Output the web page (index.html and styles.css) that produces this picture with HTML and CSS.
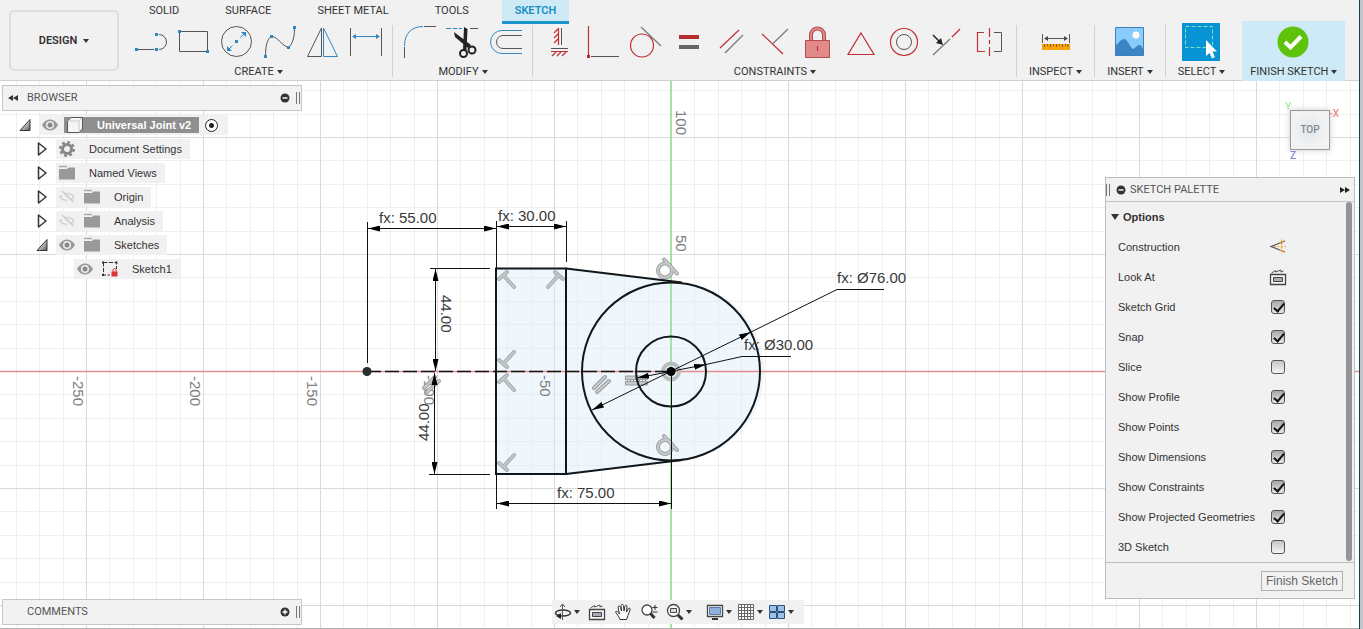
FILE: index.html
```html
<!DOCTYPE html>
<html lang="en">
<head>
<meta charset="utf-8">
<title>Universal Joint v2</title>
<link rel="stylesheet" href="styles.css">
</head>
<body>
<svg class="defs" aria-hidden="true">
  <defs>
    <linearGradient id="wedge" x1="0" y1="0" x2="1" y2="1"><stop offset=".3" stop-color="#eee"/><stop offset="1" stop-color="#555"/></linearGradient>
    <symbol id="eye" viewBox="0 0 18 16"><path d="M1 8C4 3 7 2.500 9 2.500S14 3 17 8C14 13 11 13.500 9 13.500S4 13 1 8Z" fill="#999"/><circle cx="9" cy="8" r="4" fill="#eee"/><circle cx="9" cy="8" r="2.500" fill="#888"/></symbol>
    <symbol id="eye-off" viewBox="0 0 18 16"><path d="M2 8C5 3.500 13 3.500 16 8C13 12.500 5 12.500 2 8Z" fill="none" stroke="#d6d6d6" stroke-width="1.800"/><circle cx="9" cy="8" r="2" fill="#d6d6d6"/><path d="M2.500 3.500 14 14.500" stroke="#f1f1f1" stroke-width="2"/><path d="M4 2 15.500 13" stroke="#cfcfcf" stroke-width="1.500"/></symbol>
    <symbol id="folder" viewBox="0 0 18 16"><path d="M1 1.500H9" stroke="#aaa" stroke-width="1.500"/><path d="M1 4H9L10.500 2.500H17V14.500H1Z" fill="#999"/></symbol>
    <symbol id="closed" viewBox="0 0 18 16"><path d="M5.500 2V14L13 8Z" fill="#fff" stroke="#333" stroke-width="1.500" stroke-linejoin="round"/></symbol>
    <symbol id="open" viewBox="0 0 18 16"><path d="M14 2.500V13.500H4Z" fill="url(#wedge)" stroke="#333" stroke-linejoin="round"/></symbol>
    <symbol id="lookat" viewBox="0 0 18 18"><path d="M1.500 6.500H16.500V16.500H1.500Z" fill="#f7f7f7" stroke="#444" stroke-width="1.300"/><path d="M4.500 9.500H13.500V13.500H4.500Z" fill="#aab" stroke="#444"/><path d="M2.500 5 6.500 2.500V4L12 2V4L14.500 3" fill="none" stroke="#555"/></symbol>
    <symbol id="minus" viewBox="0 0 10 10"><circle cx="5" cy="5" r="4.500" fill="#333"/><path d="M2.500 5H7.500" stroke="#fff" stroke-width="1.400"/></symbol>
    <symbol id="plus" viewBox="0 0 10 10"><circle cx="5" cy="5" r="4.500" fill="#333"/><path d="M2.500 5H7.500M5 2.500V7.500" stroke="#fff" stroke-width="1.400"/></symbol>
  </defs>
</svg>
<div class="frame">
<div class="app">
  <header class="toolbar">
    <button class="design" type="button">DESIGN<span class="caret"></span></button>
    <div class="ribbon">
      <nav class="tabs">
        <button class="tab" type="button">SOLID</button>
        <button class="tab" type="button">SURFACE</button>
        <button class="tab" type="button">SHEET METAL</button>
        <button class="tab" type="button">TOOLS</button>
        <button class="tab tab-active" type="button">SKETCH</button>
      </nav>
      <div class="groups">
        <section class="group">
          <div class="tools">
            <button class="tool" type="button" aria-label="Line"><svg viewBox="0 0 36 36"><path class="dk" d="M3.500 25.500H21M26 10.500a7.500 7.500 0 0 1 0 15"/><path class="dot" d="M2 24h3v3h-3zM22 24h3v3h-3zM22 9h3v3h-3z"/></svg></button>
            <button class="tool" type="button" aria-label="Rectangle"><svg viewBox="0 0 36 36"><path class="dk" d="M3.500 7.500H31.500V27.500H3.500Z"/><path class="dot" d="M2 6h3v3h-3zM30 26h3v3h-3z"/></svg></button>
            <button class="tool" type="button" aria-label="Circle"><svg viewBox="0 0 36 36"><circle class="dk" cx="17.500" cy="17.500" r="15"/><path class="bl" d="M10 25 25 10" stroke-dasharray="5 3"/><path class="dot" d="M8 27V22L13 27ZM27 8V13L22 8ZM16 16h3v3h-3z"/></svg></button>
            <button class="tool" type="button" aria-label="Spline"><svg viewBox="0 0 36 36"><path class="dk" d="M3.500 32C3.500 22 5 15 9.500 12.500C15 12 20 22 26.500 23.500C30 21 32.500 14 32.500 5"/><path class="dot" d="M2 31h3v3h-3zM8 11h3v3h-3zM25 22h3v3h-3zM31 2h3v3h-3z"/></svg></button>
            <button class="tool" type="button" aria-label="Mirror"><svg viewBox="0 0 36 36"><path class="dk" d="M16.500 4V32.500H2.500Z"/><path class="bl" d="M18.500 4V32.500H32.500Z"/></svg></button>
            <button class="tool" type="button" aria-label="Sketch dimension"><svg viewBox="0 0 36 36"><path class="dk" d="M2.500 4V32M33.500 4V32"/><path class="bl" d="M5 12.500H31"/><path class="dot" d="M4 12.500 8 10V15ZM32 12.500 28 10V15Z"/></svg></button>
          </div>
          <button class="label" type="button">CREATE<span class="caret"></span></button>
        </section>
        <span class="sep"></span>
        <section class="group">
          <div class="tools">
            <button class="tool" type="button" aria-label="Fillet"><svg viewBox="0 0 36 36"><path class="dk" d="M2.500 34V23M22 2.500H34"/><path class="bl" d="M2.500 22C2.500 10 9 2.500 21 2.500"/></svg></button>
            <button class="tool" type="button" aria-label="Trim"><svg viewBox="0 0 36 36"><path class="bl" d="M1 4.500H17" stroke-dasharray="5 1.500"/><path class="dk" d="M25 4.500H33"/><path d="M9 8 26 21 23 24 10 13ZM19 3 22.500 5 21.500 26H18Z" fill="#222"/><circle cx="18.500" cy="29.500" r="3.500" fill="none" stroke="#222" stroke-width="2"/><circle cx="27" cy="26" r="3.500" fill="none" stroke="#222" stroke-width="2"/></svg></button>
            <button class="tool" type="button" aria-label="Offset"><svg viewBox="0 0 36 36"><path class="bl" d="M34 6.500H14a11.500 11.500 0 0 0 0 23H34"/><path class="dk" d="M34 11.500H15a6.500 6.500 0 0 0 0 13H34"/></svg></button>
          </div>
          <button class="label" type="button">MODIFY<span class="caret"></span></button>
        </section>
        <span class="sep"></span>
        <section class="group">
          <div class="tools">
            <button class="tool" type="button" aria-label="Horizontal/Vertical"><svg viewBox="0 0 36 36"><path class="rd" d="M16.500 4V21M16 5 12 9M16 10 12 14M16 15 12 19M9 27.500H26M14 28 10 32M19 28 15 32M24 28 20 32"/><path class="dk" d="M19.500 4V21M9 24.500H26"/></svg></button>
            <button class="tool" type="button" aria-label="Coincident"><svg viewBox="0 0 36 36"><path class="rd" d="M3.500 2V31"/><path d="M2 31h3v3h-3z" fill="#b52b30"/><path class="dk" d="M6 32.500H34"/></svg></button>
            <button class="tool" type="button" aria-label="Tangent"><svg viewBox="0 0 36 36"><circle class="rd" cx="14" cy="21.500" r="11.500"/><path class="gy" d="M13 3 33 22"/></svg></button>
            <button class="tool" type="button" aria-label="Equal"><svg viewBox="0 0 36 36"><path d="M8 11H28V15H8Z" fill="#b52b30"/><path d="M8 21H28V25H8Z" fill="#666"/></svg></button>
            <button class="tool" type="button" aria-label="Parallel"><svg viewBox="0 0 36 36"><path class="rd" d="M6 24 25 6"/><path class="gy" d="M11 29 29 11"/></svg></button>
            <button class="tool" type="button" aria-label="Perpendicular"><svg viewBox="0 0 36 36"><path class="rd" d="M5 10 26 30"/><path class="gy" d="M16 19.500 31 5"/></svg></button>
            <button class="tool" type="button" aria-label="Fix"><svg viewBox="0 0 36 36"><path d="M11 16V11a6.500 6.500 0 0 1 13 0V16" fill="none" stroke="#b54a4e" stroke-width="4"/><path d="M11 16V11a6.500 6.500 0 0 1 13 0V16" fill="none" stroke="#e08a8a" stroke-width="2"/><path d="M5.500 16.500H29.500V33.500H5.500Z" fill="#e08a8a" stroke="#b9494e"/><path class="rd" d="M17.500 22V27"/></svg></button>
            <button class="tool" type="button" aria-label="Midpoint"><svg viewBox="0 0 36 36"><path class="rd" d="M18 9 31 30.500H5Z"/></svg></button>
            <button class="tool" type="button" aria-label="Concentric"><svg viewBox="0 0 36 36"><circle class="rd" cx="18" cy="18" r="13.500"/><circle class="dk" cx="18" cy="18" r="7.500"/></svg></button>
            <button class="tool" type="button" aria-label="Collinear"><svg viewBox="0 0 36 36"><path class="gy" d="M4 31 21 15"/><path class="rd" d="M23 13 31 5"/><path d="M4 11 11 18" stroke="#222" stroke-width="1.500"/><path d="M14 21 12 14 7 19Z" fill="#222"/></svg></button>
            <button class="tool" type="button" aria-label="Symmetry"><svg viewBox="0 0 36 36"><path class="rd" d="M12 8.500H5.500V27.500H13M17.500 4V13M17.500 16V20M17.500 23V32"/><path class="dk" d="M22 8.500H29.500V27.500H22"/></svg></button>
          </div>
          <button class="label" type="button">CONSTRAINTS<span class="caret"></span></button>
        </section>
        <span class="sep"></span>
        <section class="group group-single">
          <div class="tools">
            <button class="tool" type="button" aria-label="Measure"><svg viewBox="0 0 36 36"><path class="dk" d="M4.500 10V19M31.500 10V19M7 14.500H29"/><path d="M6 14.500 10 12V17ZM30 14.500 26 12V17Z" fill="#544"/><path d="M4 20H32V26H4Z" fill="#f5a30f"/><path d="M6.500 20v3M9.500 20v2M12.500 20v3M15.500 20v2M18.500 20v3M21.500 20v2M24.500 20v3M27.500 20v2M30 20v3" stroke="#8a5a08"/></svg></button>
          </div>
          <button class="label" type="button">INSPECT<span class="caret"></span></button>
        </section>
        <span class="sep"></span>
        <section class="group group-single">
          <div class="tools">
            <button class="tool" type="button" aria-label="Insert image"><svg viewBox="0 0 36 36"><path d="M3.500 3.500H31.500V31.500H3.500Z" fill="#89cbfa" stroke="#3d7ebb"/><path d="M4 21C7 19 9 15 12 15C16 15 18 24 21 25C24 24 25 21 27 21C29 21 30 23 31 25V31H4Z" fill="#3a85c3"/><circle cx="24" cy="11" r="3.500" fill="#fffdf2"/></svg></button>
          </div>
          <button class="label" type="button">INSERT<span class="caret"></span></button>
        </section>
        <span class="sep"></span>
        <section class="group group-single">
          <div class="tools">
            <button class="tool tool-large" type="button" aria-label="Select"><svg viewBox="0 0 38 38"><path d="M0 0H38V38H0Z" fill="#0893d5"/><path d="M3.500 3.500H30.500V24.500H3.500Z" fill="none" stroke="#7ee0c0" stroke-dasharray="4 2"/><path d="M24 17V33L27.500 30 30 35.500 33 34 30.500 28.500H35Z" fill="#fff"/></svg></button>
          </div>
          <button class="label" type="button">SELECT<span class="caret"></span></button>
        </section>
        <section class="group group-finish">
          <div class="tools">
            <button class="tool" type="button" aria-label="Finish sketch"><svg viewBox="0 0 36 36"><circle cx="17" cy="18" r="15.500" fill="#5fc30c"/><path d="M9 18 14.500 23.500 25 12.500" fill="none" stroke="#fff" stroke-width="4"/></svg></button>
          </div>
          <button class="label" type="button">FINISH SKETCH<span class="caret"></span></button>
        </section>
      </div>
    </div>
  </header>

  <main class="workspace">
    <svg class="sketch" viewBox="0 81 1359 547" preserveAspectRatio="xMidYMid slice">
      <defs>
        <pattern id="grid" x="86" y="20" width="117" height="117" patternUnits="userSpaceOnUse">
          <path d="M23.500 0V117M47.500 0V117M70.500 0V117M94.500 0V117M0 23.500H117M0 47.500H117M0 70.500H117M0 94.500H117" stroke="#efefef"/>
          <path d="M.5 0V117M0 .5H117" stroke="#d9dbdb"/>
        </pattern>
        <marker id="arrow" viewBox="0 0 12 6" refX="12" refY="3" markerWidth="12" markerHeight="6" markerUnits="userSpaceOnUse" orient="auto-start-reverse"><path d="M0 0 12 3 0 6Z" fill="#000"/></marker>
        <g id="perp" fill="none" stroke-linecap="round"><path d="M-8 0 0-7M-3-3 7 8" stroke="#a5a9ab" stroke-width="4"/><path d="M-8 0 0-7M-3-3 7 8" stroke="#c3c8ca" stroke-width="2"/></g>
        <g id="tan" fill="none" stroke-linecap="round"><path d="M-1-11 12 3" stroke="#9a9d9f" stroke-width="4"/><circle r="7" stroke="#9a9d9f" stroke-width="4"/><path d="M-1-11 12 3" stroke="#c6cacc" stroke-width="2"/><circle r="7" stroke="#c6cacc" stroke-width="2"/></g>
        <g id="par" fill="none" stroke-linecap="round"><path d="M-7 4 4-7M-4 8 8-3" stroke="#9a9d9f" stroke-width="4"/><path d="M-7 4 4-7M-4 8 8-3" stroke="#c6cacc" stroke-width="2"/></g>
      </defs>
      <rect x="0" y="81" width="1359" height="547" fill="url(#grid)"/>
      <path d="M496 268.500H566L682 282.500A89 89 0 0 1 682 460L566 474H496Z" fill="#d8edfb" fill-opacity=".42"/>
      <path d="M0 371.500H1359" stroke="#e58c8c" stroke-width="1.500"/>
      <path d="M671 81V628" stroke="#8fe08f" stroke-width="1.500"/>
      <g class="axis-text">
        <text transform="translate(676 110) rotate(90)">100</text>
        <text transform="translate(676 235) rotate(90)">50</text>
        <text transform="translate(540 375) rotate(90)">-50</text>
        <text transform="translate(424 375) rotate(90)">-100</text>
        <text transform="translate(307 376) rotate(90)">-150</text>
        <text transform="translate(190 376) rotate(90)">-200</text>
        <text transform="translate(73 376) rotate(90)">-250</text>
      </g>
      <use href="#perp" x="507" y="279"/>
      <use href="#perp" transform="translate(555 279) scale(-1 1)"/>
      <use href="#perp" transform="translate(507 360) scale(1 -1)"/>
      <use href="#perp" x="507" y="382"/>
      <use href="#perp" transform="translate(507 463) scale(1 -1)"/>
      <use href="#tan" x="665" y="270.500"/>
      <use href="#tan" x="665" y="447"/>
      <use href="#par" x="601" y="384"/>
      <use href="#par" x="431" y="384"/>
      <path d="M625.500 376H647.500V379.500H625.500ZM625.500 381.500H647.500V385H625.500Z" fill="#c6cacc" stroke="#9a9d9f"/>
      <path d="M627 380.500H647" stroke="#8c8f91" stroke-dasharray="1 2"/>
      <circle cx="671" cy="371.500" r="8" fill="none" stroke="#b9bdbe" stroke-width="4"/>
      <g fill="none" stroke="#11171a" stroke-width="2">
        <path d="M566 268.500H496V474H566Z"/>
        <path d="M566 268.500 682 282.500M566 474 682 460"/>
        <circle cx="671" cy="371.500" r="89"/>
        <circle cx="671" cy="371.500" r="35"/>
        <path d="M367 371.500H671" stroke-width="1.500" stroke-dasharray="14 4"/>
      </g>
      <g fill="none" stroke="#111">
        <path d="M367.500 222V363M496.500 221V268M566.500 221V262M430 268.500H490M429 474.500H490M496.500 474V509M671.500 372V509"/>
        <g marker-start="url(#arrow)" marker-end="url(#arrow)">
          <path d="M368 228.500H496"/><path d="M497 226.500H566"/>
          <path d="M435.500 269V371"/><path d="M434.500 373V474"/>
          <path d="M497 503.500H671"/>
          <path d="M592 410 751 332"/><path d="M637 378 706 364.500"/>
        </g>
        <path d="M751 332 837 289.500H884M706 364.500 742 356.500H791"/>
      </g>
      <circle cx="367" cy="371.500" r="4.500" fill="#26302f"/>
      <circle cx="671" cy="371.500" r="4.500" fill="#000"/>
      <g class="dim-text">
        <text x="379" y="223">fx: 55.00</text>
        <text x="498" y="221">fx: 30.00</text>
        <text x="557" y="498">fx: 75.00</text>
        <text x="837" y="283">fx: Ø76.00</text>
        <text x="744" y="350">fx: Ø30.00</text>
        <text transform="translate(441 295) rotate(90)">44.00</text>
        <text transform="translate(429 441) rotate(-90)">44.00</text>
      </g>
    </svg>

    <div class="viewcube">
      <span class="ax ax-y">Y</span><span class="ax ax-x">-X</span><span class="ax ax-z">Z</span>
      <button type="button" class="cube">TOP</button>
    </div>

    <aside class="browser">
      <header class="bar">
        <svg class="i10" viewBox="0 0 10 10"><path d="M5 2V8L0 5ZM10 2V8L5 5Z" fill="#333"/></svg>
        <h2>BROWSER</h2>
        <svg class="i10"><use href="#minus"/></svg><span class="grip"></span>
      </header>
      <ul class="tree">
        <li class="l1"><svg class="ico toggle"><use href="#open"/></svg><div class="chip"><svg class="ico"><use href="#eye"/></svg><span class="selected"><svg class="ico" viewBox="0 0 18 16"><path d="M5 .5H16.500V12L13 15.500H1.500V4Z" fill="#f5f5f8" stroke="#555"/><path d="M1.500 4H13V15M13 4 16 1" fill="none" stroke="#ccc"/></svg><span class="name">Universal Joint v2</span></span><input class="activate" type="radio" checked aria-label="Activate Universal Joint v2"></div></li>
        <li class="l2"><svg class="ico toggle"><use href="#closed"/></svg><div class="chip"><svg class="ico" viewBox="0 0 18 16"><circle cx="9" cy="8" r="4.500" fill="none" stroke="#888" stroke-width="3"/><circle cx="9" cy="8" r="6.700" fill="none" stroke="#888" stroke-width="2.600" stroke-dasharray="2.800 2.460"/></svg><span class="name">Document Settings</span></div></li>
        <li class="l2"><svg class="ico toggle"><use href="#closed"/></svg><div class="chip"><svg class="ico"><use href="#folder"/></svg><span class="name">Named Views</span></div></li>
        <li class="l2"><svg class="ico toggle"><use href="#closed"/></svg><div class="chip"><svg class="ico"><use href="#eye-off"/></svg><svg class="ico"><use href="#folder"/></svg><span class="name">Origin</span></div></li>
        <li class="l2"><svg class="ico toggle"><use href="#closed"/></svg><div class="chip"><svg class="ico"><use href="#eye-off"/></svg><svg class="ico"><use href="#folder"/></svg><span class="name">Analysis</span></div></li>
        <li class="l2"><svg class="ico toggle"><use href="#open"/></svg><div class="chip"><svg class="ico"><use href="#eye"/></svg><svg class="ico"><use href="#folder"/></svg><span class="name">Sketches</span></div></li>
        <li class="l3"><div class="chip"><svg class="ico"><use href="#eye"/></svg><svg class="ico" viewBox="0 0 18 16"><path d="M2.500 1.500H15.500V8M2.500 1.500V14H9" fill="none" stroke="#333" stroke-dasharray="4 1.500"/><path d="M1 .5h2v2h-2zM14.500 .5h2v2h-2zM1 13h2v2h-2z" fill="#333"/><path d="M10.500 10.500H16.500V15.500H10.500Z" fill="#d8363c"/><path d="M12 11V9a1.500 1.500 0 0 1 3 0V11" fill="none" stroke="#d8363c"/></svg><span class="name">Sketch1</span></div></li>
      </ul>
    </aside>

    <aside class="comments bar">
      <h2>COMMENTS</h2>
      <svg class="i10"><use href="#plus"/></svg><span class="grip"></span>
    </aside>

    <nav class="navbar">
      <button type="button" aria-label="Orbit"><svg viewBox="0 0 18 18"><ellipse cx="9" cy="10" rx="7.500" ry="3" fill="none" stroke="#333" stroke-width="1.500"/><path d="M8.500 1V17M6 4 8.500 1 11 4" fill="none" stroke="#555"/><path d="M2 13 7 10V16Z" fill="#222"/></svg><span class="caret"></span></button>
      <button type="button" aria-label="Look at"><svg><use href="#lookat"/></svg></button>
      <button type="button" aria-label="Pan"><svg viewBox="0 0 18 18"><path d="M6 16.500C5 13 2.500 11 1.500 9C2 7.500 4 8.500 5.500 11L4 4C4.500 2.500 6 3 6.500 4.500L7.500 8 7 2.500C7.500 1 9 1 9.500 2.500L10 8 11 3C11.500 1.500 13 2 13 3.500L12.500 9 14.500 5.500C15.500 4.500 16.500 5.500 16 7L14 12.500 12.500 16.500Z" fill="#fff" stroke="#333"/></svg></button>
      <button type="button" aria-label="Zoom"><svg viewBox="0 0 18 18"><circle cx="7" cy="7" r="5" fill="#fff" stroke="#444" stroke-width="1.300"/><path d="M10.500 10.500 14.500 15" stroke="#333" stroke-width="3"/><path d="M12.500 4.500H17.500M15 2V7M12.500 9H17.500" stroke="#333"/></svg></button>
      <button type="button" aria-label="Zoom window"><svg viewBox="0 0 18 18"><circle cx="7.500" cy="7.500" r="6" fill="#fff" stroke="#444" stroke-width="1.300"/><path d="M4.500 5.500H10.500V9.500H4.500Z" fill="#ddd" stroke="#444"/><path d="M12 12 16.500 16.500" stroke="#333" stroke-width="3"/></svg><span class="caret"></span></button>
      <button type="button" class="wide" aria-label="Display settings"><svg viewBox="0 0 18 18"><path d="M1.500 2.500H16.500V13.500H1.500Z" fill="#fff" stroke="#444" stroke-width="1.300"/><path d="M3.500 4.500H14.500V11.500H3.500Z" fill="#8fb2dd" stroke="#5a7ca8"/><path d="M6 16H12" stroke="#333" stroke-width="2"/></svg><span class="caret"></span></button>
      <button type="button" aria-label="Grid and snaps"><svg viewBox="0 0 18 18"><path d="M1.500 1.500H16.500V16.500H1.500ZM4.500 1V17M7.500 1V17M10.500 1V17M13.500 1V17M1 4.500H17M1 7.500H17M1 10.500H17M1 13.500H17" fill="#fff" stroke="#666"/></svg><span class="caret"></span></button>
      <button type="button" aria-label="Viewports"><svg viewBox="0 0 18 18"><path d="M1.500 2.500H8.500V8.500H1.500ZM9.500 2.500H16.500V8.500H9.500ZM1.500 9.500H8.500V15.500H1.500ZM9.500 9.500H16.500V15.500H9.500Z" fill="#9cc0ea" stroke="#2f5078"/></svg><span class="caret"></span></button>
    </nav>

    <aside class="palette">
      <header class="palette-head"><span class="grip"></span><svg class="i10"><use href="#minus"/></svg><h2>SKETCH PALETTE</h2><svg class="i10" viewBox="0 0 10 10"><path d="M0 2V8L5 5ZM5 2V8L10 5Z" fill="#222"/></svg></header>
      <div class="palette-body">
        <div class="options">
          <h3><span class="caret"></span>Options</h3>
          <div class="opt"><span>Construction</span><button type="button" aria-label="Construction"><svg viewBox="0 0 18 18"><path d="M16 3 2 8.500 16 14" fill="none" stroke="#555" stroke-width="1.300"/><path d="M5 8.500H17M12.500 1.500V16M10 5 15 3M10 12 15 14" fill="none" stroke="#f0a030" stroke-width="1.200" stroke-dasharray="2 1.500"/></svg></button></div>
          <div class="opt"><span>Look At</span><button type="button" aria-label="Look At"><svg><use href="#lookat"/></svg></button></div>
          <div class="opt"><label for="o1">Sketch Grid</label><input id="o1" type="checkbox" checked></div>
          <div class="opt"><label for="o2">Snap</label><input id="o2" type="checkbox" checked></div>
          <div class="opt"><label for="o3">Slice</label><input id="o3" type="checkbox"></div>
          <div class="opt"><label for="o4">Show Profile</label><input id="o4" type="checkbox" checked></div>
          <div class="opt"><label for="o5">Show Points</label><input id="o5" type="checkbox" checked></div>
          <div class="opt"><label for="o6">Show Dimensions</label><input id="o6" type="checkbox" checked></div>
          <div class="opt"><label for="o7">Show Constraints</label><input id="o7" type="checkbox" checked></div>
          <div class="opt"><label for="o8">Show Projected Geometries</label><input id="o8" type="checkbox" checked></div>
          <div class="opt"><label for="o9">3D Sketch</label><input id="o9" type="checkbox"></div>
        </div>
        <span class="scrollbar"></span>
      </div>
      <footer><button type="button" class="finish">Finish Sketch</button></footer>
    </aside>
  </main>
</div>
</div>
</body>
</html>
```
FILE: styles.css
```css
* { box-sizing: border-box; }
body { margin: 0; font: 11px/14px "Liberation Sans", sans-serif; color: #333; }
button { margin: 0; padding: 0; border: 0; background: none; font: inherit; color: inherit; }
h2, h3 { margin: 0; font: inherit; }
.defs { position: absolute; width: 0; height: 0; }

.frame { min-height: 100vh; display: flex; background: #c3c6ca; padding-right: 3px; }
.app { flex: 1; min-width: 0; display: flex; flex-direction: column; background: #fff; border-right: 1px solid #1d4050; }

.caret { display: inline-block; border: 3px solid transparent; border-top: 4px solid #333; border-bottom: 0; margin-left: 3px; }

/* Toolbar */
.toolbar { display: flex; height: 81px; background: #f1f1f1; border-bottom: 1px solid #cfcfcf; font-family: Roboto, sans-serif; }
.design { flex: none; width: 110px; height: 61px; margin: 10px 5px 0 9px; border: 2px solid #dedede; border-radius: 5px; font-weight: 600; display: flex; align-items: center; justify-content: center; }
.design .caret { margin-left: 6px; }
.ribbon { flex: 1; display: flex; flex-direction: column; min-width: 0; }
.tabs { display: flex; align-items: flex-start; gap: 20px; height: 21px; padding-left: 12px; }
.tab { flex: none; height: 24px; padding: 0 13px 3px; }
.tab-active { padding-bottom: 0; background: #cdeaf6; border-bottom: 3px solid #1e95cd; color: #1e8fc4; font-weight: 600; }
.groups { display: flex; flex: 1; }
.group { flex: none; display: flex; flex-direction: column; align-items: center; padding: 2px 8px 0 9px; }
.group-single { padding: 2px 12px 0; }
.group-finish { margin-left: 5px; padding: 2px 8px 0; background: #cdeaf6; }
.sep { flex: none; width: 1px; margin: 4px 0; background: #d2d2d2; }
.tools { display: flex; align-items: center; gap: 7px; height: 38px; }
.tool { display: block; width: 36px; height: 36px; }
.tool svg { display: block; width: 100%; height: 100%; }
.tool-large { width: 38px; height: 38px; }
.label { display: flex; align-items: center; height: 20px; padding-top: 2px; }
.dk, .bl, .rd, .gy { fill: none; stroke: #555; }
.bl { stroke: #2f87c4; }
.rd { stroke: #bf2f35; stroke-width: 1.2; }
.gy { stroke: #777; stroke-width: 1.2; }
.dot { fill: #2f87c4; }

/* Workspace */
.workspace { position: relative; flex: 1; overflow: hidden; border-bottom: 1px solid #b0b0b0; }
.sketch { position: absolute; inset: 0; width: 100%; height: 100%; }
.axis-text, .dim-text { font: 15px "Liberation Sans", sans-serif; fill: #3a3a3a; }
.axis-text { fill: #808080; }

.i10 { flex: none; width: 10px; height: 10px; }
.grip { flex: none; width: 4px; height: 12px; border: solid #777; border-width: 0 1px; }
.bar { display: flex; align-items: center; width: 300px; height: 26px; padding: 0 1px 0 5px; background: #f2f2f2; border: 1px solid #c6c6c6; color: #555; font-family: Roboto, sans-serif; }
.bar h2 { flex: 1; margin-left: 9px; }
.bar .grip { margin-left: 6px; }

/* Browser tree */
.browser { position: absolute; left: 2px; top: 4px; }
.tree { list-style: none; margin: 2px 0 0; padding: 0; }
.tree li { display: flex; align-items: center; height: 24px; }
.l1 { padding-left: 14px; }
.l2 { padding-left: 31px; }
.l3 { padding-left: 72px; }
.ico { flex: none; width: 18px; height: 16px; }
.toggle { margin-right: 5px; }
.chip { display: flex; align-items: center; gap: 7px; height: 20px; padding: 0 8px 0 2px; background: #f1f1f1; }
.name { margin-left: 6px; }
.selected { display: flex; align-items: center; gap: 7px; height: 16px; margin-left: -2px; padding: 0 8px 0 2px; background: #8f8f8f; color: #fff; font-weight: 700; }
.activate { appearance: none; width: 13px; height: 13px; margin: 0 2px 0 -1px; border: 1px solid #222; border-radius: 50%; background: radial-gradient(circle, #222 0 2px, #fff 3px); }

.comments { position: absolute; left: 2px; bottom: 3px; }
.comments h2 { margin-left: 19px; }

/* Navigation bar */
.navbar { position: absolute; left: 552px; bottom: 4px; display: flex; align-items: center; gap: 8px; height: 24px; padding: 0 10px 0 2px; background: #f1f1f1; }
.navbar button { display: flex; align-items: center; }
.navbar svg { width: 18px; height: 18px; }
.navbar .caret { margin-left: 2px; }
.navbar .wide { margin-left: 6px; }
.navbar .wide ~ button { margin-left: -3px; }

/* View cube */
.viewcube { position: absolute; right: 29px; top: 29px; width: 40px; height: 40px; font: 10px/10px Roboto, sans-serif; }
.cube { width: 40px; height: 40px; border: 1px solid #999; background: radial-gradient(#e6e9ee 20%, #f3f3f3 70%); box-shadow: 0 0 6px #ccc; color: #83868c; font-weight: 500; }
.ax { position: absolute; font-weight: 500; }
.ax-y { left: -5px; top: -8px; color: #a4eba4; }
.ax-x { right: -9px; top: -1px; color: #ee8b8b; }
.ax-z { left: 0; bottom: -11px; color: #8585dd; }

/* Sketch palette */
.palette { position: absolute; right: 4px; top: 96px; width: 250px; background: #f1f1f1; border: 1px solid #bdbdbd; }
.palette-head { display: flex; align-items: center; height: 24px; padding: 0 4px 0 0; border-bottom: 1px solid #c6c6c6; font-family: Roboto, sans-serif; color: #555; }
.palette-head .i10:first-of-type { margin-left: 6px; }
.palette-head h2 { flex: 1; margin-left: 4px; }
.palette-body { display: flex; border-bottom: 1px solid #bdbdbd; }
.options { flex: 1; }
.options h3 { display: flex; align-items: center; height: 30px; padding-left: 5px; font-weight: 700; }
.options h3 .caret { margin: 0 4px 0 0; border-width: 6px 4px 0; }
.opt { display: flex; align-items: center; justify-content: space-between; height: 30px; padding: 0 61px 0 12px; }
.opt label, .opt span { flex: 1; white-space: nowrap; }
.opt button { width: 18px; height: 18px; margin-right: -2px; }
.opt svg { display: block; width: 18px; height: 18px; }
.opt input { appearance: none; position: relative; width: 14px; height: 14px; margin: 0; border: 1px solid #555; border-radius: 3px; background: linear-gradient(#c4c4c4, #f6f6f6); }
.opt input:checked { background: linear-gradient(#a6a6a6, #e8e8e8); }
.opt input:checked::after { content: ""; position: absolute; left: 4px; top: 0; width: 4px; height: 9px; border: solid #111; border-width: 0 2px 2px 0; transform: rotate(40deg); }
.scrollbar { width: 6px; margin: 0 2px 1px 0; border-radius: 3px; background: #949499; }
.palette footer { display: flex; justify-content: flex-end; padding: 8px 11px 7px; }
.finish { height: 20px; padding: 0 4px; border: 1px solid #b0b0b0; font-size: 12px; color: #666; }
```
